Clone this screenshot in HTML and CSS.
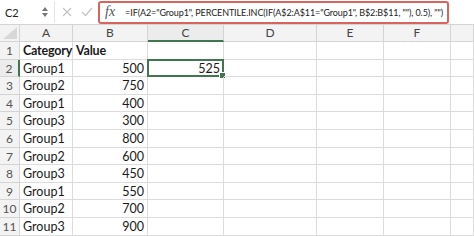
FILE: index.html
```html
<!DOCTYPE html>
<html>
<head>
	<link rel="stylesheet" href="styles.css">
</head>
<body>
	<div class="bar">
		<div class="namebox">C2</div>
		<div class="spin">
			<svg width="6" height="12" viewBox="0 0 6 12"><path d="M0 5 L3 1 L6 5 Z M0 7 L3 11 L6 7 Z" fill="#777"/></svg>
		</div>
		<div class="sep"></div>
		<div class="btn">
			<svg width="10" height="10" viewBox="0 0 10 10"><path d="M1 1 L9 9 M9 1 L1 9" stroke="#c4c4c4" stroke-width="1.2"/></svg>
		</div>
		<div class="btn">
			<svg width="12" height="10" viewBox="0 0 12 10"><path d="M1 5 L4.5 8.5 L11 1" stroke="#c4c4c4" stroke-width="1.2" fill="none"/></svg>
		</div>
		<div class="formula">
			<span class="fx">fx</span>
			<span class="ftext">=IF(A2="Group1", PERCENTILE.INC(IF(A$2:A$11="Group1", B$2:B$11, ""), 0.5), "")</span>
		</div>
	</div>

	<div class="sheet">
		<div class="corner"><svg width="14" height="12" viewBox="0 0 14 12"><path d="M14 0 L14 12 L0 12 Z" fill="#d8d8d8"/></svg></div>
		<div class="colhead">A</div>
		<div class="colhead">B</div>
		<div class="colhead sel">C</div>
		<div class="colhead">D</div>
		<div class="colhead">E</div>
		<div class="colhead">F</div>
		<div class="colhead"></div>

		<div class="rowhead">1</div>
		<div class="cell bold">Category</div>
		<div class="cell bold">Value</div>
		<div class="cell"></div><div class="cell"></div><div class="cell"></div><div class="cell"></div><div class="cell"></div>

		<div class="rowhead sel">2</div>
		<div class="cell">Group1</div>
		<div class="cell num">500</div>
		<div class="cell num active">525<span class="handle"></span></div>
		<div class="cell"></div><div class="cell"></div><div class="cell"></div><div class="cell"></div>

		<div class="rowhead">3</div>
		<div class="cell">Group2</div>
		<div class="cell num">750</div>
		<div class="cell"></div><div class="cell"></div><div class="cell"></div><div class="cell"></div><div class="cell"></div>

		<div class="rowhead">4</div>
		<div class="cell">Group1</div>
		<div class="cell num">400</div>
		<div class="cell"></div><div class="cell"></div><div class="cell"></div><div class="cell"></div><div class="cell"></div>

		<div class="rowhead">5</div>
		<div class="cell">Group3</div>
		<div class="cell num">300</div>
		<div class="cell"></div><div class="cell"></div><div class="cell"></div><div class="cell"></div><div class="cell"></div>

		<div class="rowhead">6</div>
		<div class="cell">Group1</div>
		<div class="cell num">800</div>
		<div class="cell"></div><div class="cell"></div><div class="cell"></div><div class="cell"></div><div class="cell"></div>

		<div class="rowhead">7</div>
		<div class="cell">Group2</div>
		<div class="cell num">600</div>
		<div class="cell"></div><div class="cell"></div><div class="cell"></div><div class="cell"></div><div class="cell"></div>

		<div class="rowhead">8</div>
		<div class="cell">Group3</div>
		<div class="cell num">450</div>
		<div class="cell"></div><div class="cell"></div><div class="cell"></div><div class="cell"></div><div class="cell"></div>

		<div class="rowhead">9</div>
		<div class="cell">Group1</div>
		<div class="cell num">550</div>
		<div class="cell"></div><div class="cell"></div><div class="cell"></div><div class="cell"></div><div class="cell"></div>

		<div class="rowhead">10</div>
		<div class="cell">Group2</div>
		<div class="cell num">700</div>
		<div class="cell"></div><div class="cell"></div><div class="cell"></div><div class="cell"></div><div class="cell"></div>

		<div class="rowhead">11</div>
		<div class="cell">Group3</div>
		<div class="cell num">900</div>
		<div class="cell"></div><div class="cell"></div><div class="cell"></div><div class="cell"></div><div class="cell"></div>
	</div>
</body>
</html>
```

FILE: styles.css
```css
body {
	margin: 0;
	width: 474px;
	height: 236px;
	overflow: hidden;
	background: #fff;
	font-family: Lato, "Liberation Sans", sans-serif;
	color: #1a1a1a;
}

.bar {
	display: flex;
	align-items: center;
	height: 25px;
	border-bottom: 1px solid #d4d4d4;
	box-sizing: border-box;
}

.namebox {
	width: 42px;
	padding-left: 5px;
	box-sizing: border-box;
	font-size: 11px;
	color: #222;
}

.spin {
	width: 8px;
	display: flex;
	align-items: center;
}

.sep {
	width: 1px;
	height: 20px;
	background: #e2e2e2;
	margin-left: 4px;
	margin-right: 2px;
}

.btn {
	width: 20px;
	display: flex;
	justify-content: center;
	align-items: center;
}

.formula {
	display: flex;
	align-items: center;
	margin-left: 1px;
	width: 351px;
	height: 23px;
	box-sizing: border-box;
	border: 2px solid #d9645d;
	border-radius: 3px;
	padding-left: 5px;
	white-space: nowrap;
	overflow: hidden;
}

.fx {
	font-family: "Liberation Serif", serif;
	font-style: italic;
	font-size: 14px;
	color: #555;
	margin-right: 10px;
}

.ftext {
	font-size: 9px;
	letter-spacing: -0.1px;
	color: #222;
}

.sheet {
	display: grid;
	grid-template-columns: 20px 53px 75px 76px 93px 67px 67px 1fr;
	grid-template-rows: 17px repeat(11, 17.6px);
}

.corner {
	background: #f3f3f3;
	border-right: 1px solid #d4d4d4;
	border-bottom: 1px solid #d4d4d4;
	display: flex;
	align-items: flex-end;
	justify-content: flex-end;
	padding: 0 2px 2px 0;
	box-sizing: border-box;
}

.colhead {
	background: #f3f3f3;
	border-right: 1px solid #d4d4d4;
	border-bottom: 1px solid #d4d4d4;
	box-sizing: border-box;
	text-align: center;
	font-size: 12px;
	line-height: 16px;
	color: #444;
}

.colhead.sel {
	border-bottom: 2px solid #3f7650;
	background: #ececec;
}

.rowhead {
	background: #f3f3f3;
	border-right: 1px solid #d4d4d4;
	border-bottom: 1px solid #d4d4d4;
	box-sizing: border-box;
	text-align: center;
	font-size: 12px;
	line-height: 17px;
	color: #555;
}

.rowhead.sel {
	border-right: 2px solid #3f7650;
	background: #ececec;
}

.cell {
	position: relative;
	border-right: 1px solid #dcdcdc;
	border-bottom: 1px solid #dcdcdc;
	box-sizing: border-box;
	font-size: 12.5px;
	line-height: 17px;
	padding: 0 3px;
	white-space: nowrap;
}

.bold {
	font-weight: bold;
	letter-spacing: -0.2px;
}

.num {
	text-align: right;
}

.active {
	border: 2px solid #3f7650;
	margin: -1px 0 0 -1px;
	line-height: 15px;
	padding-right: 2px;
}

.handle {
	position: absolute;
	right: -4px;
	bottom: -4px;
	width: 5px;
	height: 5px;
	background: #3f7650;
	border: 1px solid #fff;
}
```
